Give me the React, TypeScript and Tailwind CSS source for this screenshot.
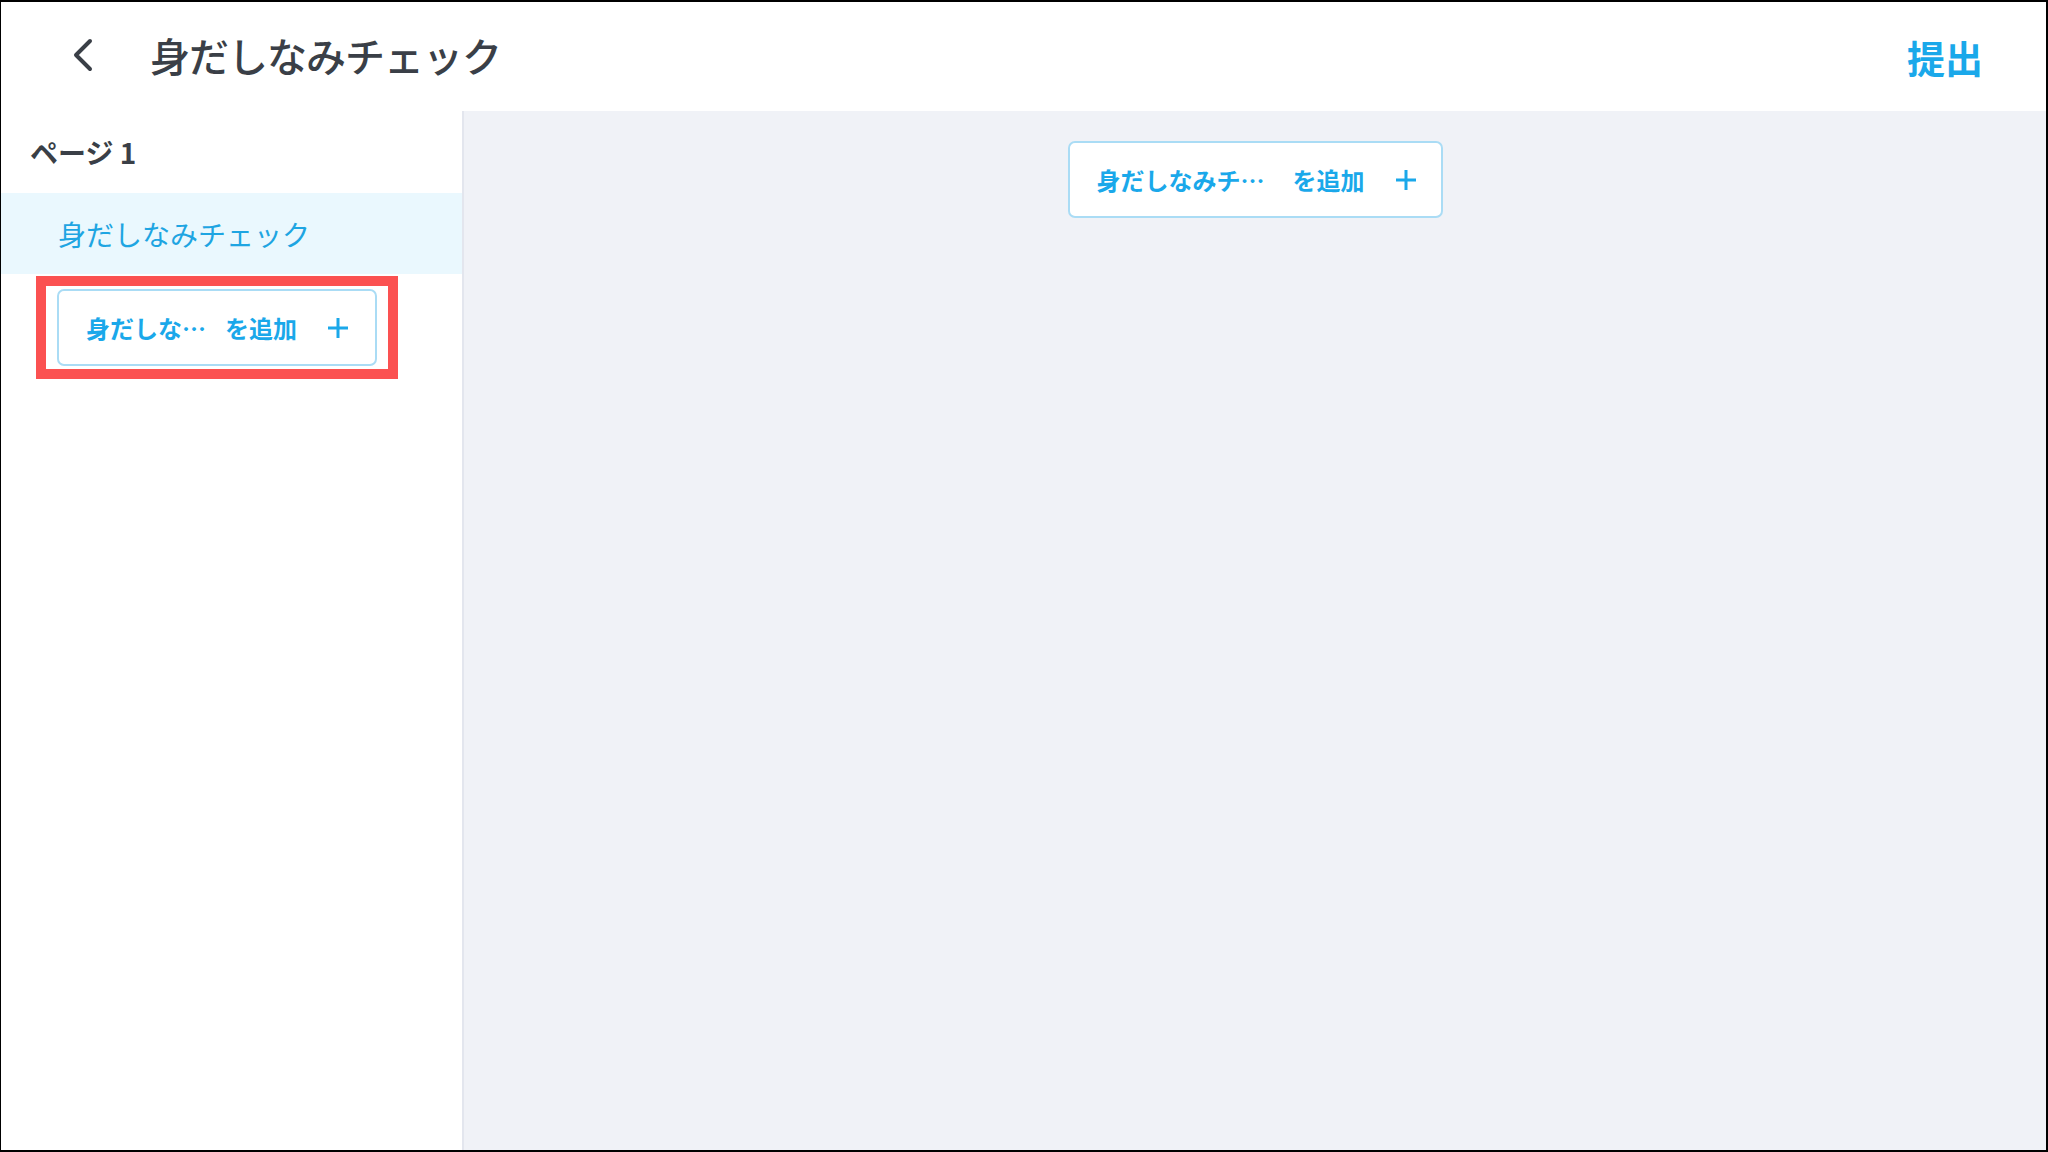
import React from 'react';

const font = { fontFamily: '"Noto Sans CJK JP", "Noto Sans", sans-serif' };

const Plus: React.FC = () => (
  <svg width="22" height="22" viewBox="0 0 22 22" className="shrink-0">
    <path d="M11 1v20M1 11h20" stroke="#1aa8ea" strokeWidth="3" fill="none" />
  </svg>
);

const AddButton: React.FC<{ label: string; textW: string; w: string; gap: string }> = ({ label, textW, w, gap }) => (
  <button
    className={`flex items-center ${w} h-[77px] pl-[27px] bg-white border-2 border-[#aadcf5] rounded-[7px] text-[24px] font-bold text-[#1aa8ea]`}
  >
    <span className={`truncate ${textW} text-left`}>{label}</span>
    <span className={gap}>を追加</span>
    <span className="ml-[30px]">
      <Plus />
    </span>
  </button>
);

export default function App() {
  return (
    <div
      style={font}
      className="w-[2048px] h-[1152px] flex flex-col bg-white border-t-2 border-r-2 border-b-2 border-l border-black overflow-hidden"
    >
      <header className="h-[109px] shrink-0 flex items-center pl-[71px] pr-[63px]">
        <svg width="22" height="34" viewBox="0 0 22 34" className="shrink-0 -mt-[3px]">
          <path d="M18 3L4 17l14 14" stroke="#3a3f47" strokeWidth="4" fill="none" strokeLinecap="round" strokeLinejoin="round" />
        </svg>
        <h1 className="ml-[56px] -mt-[3px] text-[40px] font-medium text-[#3a3f47] tracking-[-1px]">身だしなみチェック</h1>
        <div className="ml-auto text-[38px] font-bold text-[#1aa8ea]">提出</div>
      </header>

      <div className="flex flex-1 min-h-0">
        <aside className="w-[463px] shrink-0 border-r-2 border-[#e3e6ee] flex flex-col">
          <div className="h-[82px] flex items-center pl-[29px] text-[28px] font-bold text-[#3a3f47]">ページ 1</div>
          <div className="h-[81px] flex items-center pl-[57px] bg-[#eaf8fe] text-[28px] text-[#1ea5e2]">身だしなみチェック</div>
          <div className="mt-[2px] ml-[35px] w-[362px] h-[103px] border-[10px] border-[#fb5151] flex items-center pl-[11px]">
            <AddButton label="身だしなみチェック" textW="max-w-[121px]" w="w-[320px]" gap="ml-[18px]" />
          </div>
        </aside>

        <main className="flex-1 bg-[#f0f2f7] flex justify-center pt-[30px]">
          <div>
            <AddButton label="身だしなみチェック" textW="max-w-[172px]" w="w-[375px]" gap="ml-[24px]" />
          </div>
        </main>
      </div>
    </div>
  );
}
